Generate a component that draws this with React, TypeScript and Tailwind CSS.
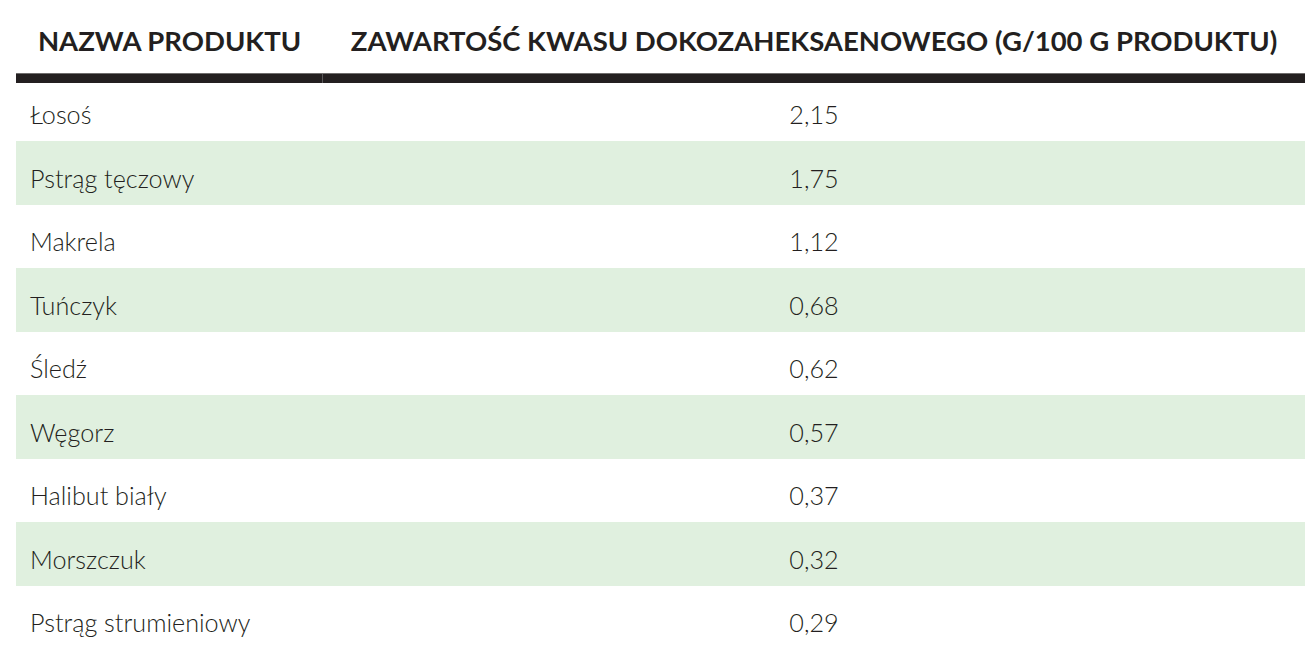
const rows: [string, string][] = [
  ["Łosoś", "2,15"],
  ["Pstrąg tęczowy", "1,75"],
  ["Makrela", "1,12"],
  ["Tuńczyk", "0,68"],
  ["Śledź", "0,62"],
  ["Węgorz", "0,57"],
  ["Halibut biały", "0,37"],
  ["Morszczuk", "0,32"],
  ["Pstrąg strumieniowy", "0,29"],
];

export default function App() {
  return (
    <div className="min-h-[645px] bg-white pl-4 pr-[7px] text-[#231f20] font-['Lato','Liberation_Sans',sans-serif]">
      <div className="grid grid-cols-[307px_1fr] h-[73px] items-end pb-[19px] text-[27.5px] font-bold uppercase leading-none">
        <div className="text-center">Nazwa produktu</div>
        <div className="text-center">Zawartość kwasu dokozaheksaenowego (g/100 g produktu)</div>
      </div>
      <div className="grid grid-cols-[307px_1fr] h-[10px] border-t border-[#6e6c6c]">
        <div className="bg-[#231f20] border-r border-[#5a5859]" />
        <div className="bg-[#231f20]" />
      </div>
      {rows.map(([name, value], i) => (
        <div
          key={name}
          className={`grid grid-cols-[307px_1fr] items-center text-[25.2px] font-light leading-none ${i === 0 ? "h-[58px] pt-[6px]" : "h-[63.5px] pt-[11px]"} ${i % 2 === 1 ? "bg-[#e0f0df]" : "bg-white"}`}
        >
          <div className="pl-[14px]">{name}</div>
          <div className="text-center">{value}</div>
        </div>
      ))}
    </div>
  );
}
